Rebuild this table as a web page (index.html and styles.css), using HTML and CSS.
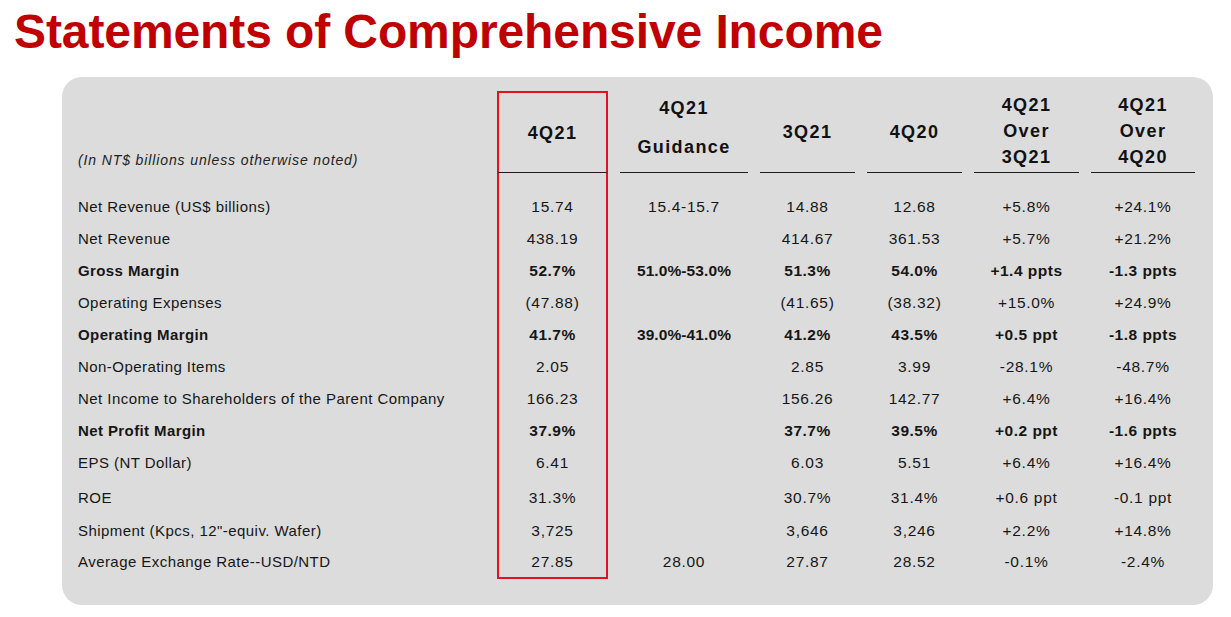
FILE: index.html
```html
<!DOCTYPE html>
<html lang="en">
<head>
<meta charset="utf-8">
<title>Statements of Comprehensive Income</title>
<link rel="stylesheet" href="styles.css">
</head>
<body>
<h1 class="title">Statements of Comprehensive Income</h1>
<section class="panel">
  <div class="stmt">
    <div class="head">
      <div class="hcell hcell--label"><span class="note">(In NT$ billions unless otherwise noted)</span></div>
      <div class="hcell hcell--ul hl hl--top"><span>4Q21</span></div>
      <div class="hcell hcell--ul hcell--guide"><span>4Q21</span><span class="guide-2">Guidance</span></div>
      <div class="hcell hcell--ul"><span>3Q21</span></div>
      <div class="hcell hcell--ul"><span>4Q20</span></div>
      <div class="hcell hcell--ul hcell--three"><span>4Q21</span><span>Over</span><span>3Q21</span></div>
      <div class="hcell hcell--ul hcell--three"><span>4Q21</span><span>Over</span><span>4Q20</span></div>
    </div>

    <div class="row row--first"><div class="lbl">Net Revenue (US$ billions)</div><div class="v hl">15.74</div><div class="v">15.4-15.7</div><div class="v">14.88</div><div class="v">12.68</div><div class="v">+5.8%</div><div class="v">+24.1%</div></div>
    <div class="row"><div class="lbl">Net Revenue</div><div class="v hl">438.19</div><div class="v"></div><div class="v">414.67</div><div class="v">361.53</div><div class="v">+5.7%</div><div class="v">+21.2%</div></div>
    <div class="row row--b"><div class="lbl">Gross Margin</div><div class="v hl">52.7%</div><div class="v guide-range">51.0%-53.0%</div><div class="v">51.3%</div><div class="v">54.0%</div><div class="v">+1.4 ppts</div><div class="v">-1.3 ppts</div></div>
    <div class="row"><div class="lbl">Operating Expenses</div><div class="v hl">(47.88)</div><div class="v"></div><div class="v">(41.65)</div><div class="v">(38.32)</div><div class="v">+15.0%</div><div class="v">+24.9%</div></div>
    <div class="row row--b"><div class="lbl">Operating Margin</div><div class="v hl">41.7%</div><div class="v guide-range">39.0%-41.0%</div><div class="v">41.2%</div><div class="v">43.5%</div><div class="v">+0.5 ppt</div><div class="v">-1.8 ppts</div></div>
    <div class="row"><div class="lbl">Non-Operating Items</div><div class="v hl">2.05</div><div class="v"></div><div class="v">2.85</div><div class="v">3.99</div><div class="v">-28.1%</div><div class="v">-48.7%</div></div>
    <div class="row"><div class="lbl">Net Income to Shareholders of the Parent Company</div><div class="v hl">166.23</div><div class="v"></div><div class="v">156.26</div><div class="v">142.77</div><div class="v">+6.4%</div><div class="v">+16.4%</div></div>
    <div class="row row--b"><div class="lbl">Net Profit Margin</div><div class="v hl">37.9%</div><div class="v"></div><div class="v">37.7%</div><div class="v">39.5%</div><div class="v">+0.2 ppt</div><div class="v">-1.6 ppts</div></div>
    <div class="row"><div class="lbl">EPS (NT Dollar)</div><div class="v hl">6.41</div><div class="v"></div><div class="v">6.03</div><div class="v">5.51</div><div class="v">+6.4%</div><div class="v">+16.4%</div></div>
    <div class="row row--roe"><div class="lbl">ROE</div><div class="v hl">31.3%</div><div class="v"></div><div class="v">30.7%</div><div class="v">31.4%</div><div class="v">+0.6 ppt</div><div class="v">-0.1 ppt</div></div>
    <div class="row row--ship"><div class="lbl">Shipment (Kpcs, 12"-equiv. Wafer)</div><div class="v hl">3,725</div><div class="v"></div><div class="v">3,646</div><div class="v">3,246</div><div class="v">+2.2%</div><div class="v">+14.8%</div></div>
    <div class="row row--last"><div class="lbl">Average Exchange Rate--USD/NTD</div><div class="v hl hl--bottom">27.85</div><div class="v">28.00</div><div class="v">27.87</div><div class="v">28.52</div><div class="v">-0.1%</div><div class="v">-2.4%</div></div>
  </div>
</section>
</body>
</html>
```
FILE: styles.css
```css
html, body {
  margin: 0;
  padding: 0;
  background: #ffffff;
}
body {
  width: 1231px;
  height: 617px;
  overflow: hidden;
  font-family: "Liberation Sans", Arial, sans-serif;
  color: #161616;
}
.title {
  margin: 8px 0 0 14px;
  font-size: 48px;
  line-height: 48px;
  font-weight: 700;
  color: #c00000;
  letter-spacing: -0.1px;
}
.panel {
  margin: 21px 0 0 62px;
  width: 1151px;
  height: 528px;
  box-sizing: border-box;
  padding: 14px 17px 0 16px;
  background: #dcdcdc;
  border-radius: 20px;
}
.stmt {
  display: flex;
  flex-direction: column;
}
.head,
.row {
  display: grid;
  grid-template-columns: 407px 111px 128px 95px 95px 105px 104px;
  column-gap: 12px;
}
.head {
  height: 82px;
}
.hcell {
  box-sizing: border-box;
  display: flex;
  flex-direction: column;
  align-items: center;
  justify-content: center;
  font-weight: 700;
  font-size: 18px;
  letter-spacing: 1.4px;
  line-height: 26px;
  color: #111;
}
.hcell--ul {
  border-bottom: 1px solid #1e1e1e;
}
.hcell--guide {
  justify-content: flex-start;
  padding-top: 4px;
}
.guide-2 {
  margin-top: 13px;
}
.hcell--three {
  padding-bottom: 2px;
}
.hcell--label {
  align-items: flex-start;
  justify-content: flex-end;
  padding-bottom: 4px;
}
.note {
  font-size: 14px;
  font-weight: 400;
  font-style: italic;
  letter-spacing: 0.88px;
  line-height: 18px;
  color: #222;
}
.hl {
  box-sizing: border-box;
  border-left: 2px solid #e3121c;
  border-right: 2px solid #e3121c;
}
.hl--top {
  border-top: 2px solid #e3121c;
}
.hl--bottom {
  border-bottom: 2px solid #e3121c;
}
.lbl,
.v {
  line-height: 32px;
  white-space: nowrap;
}
.lbl {
  font-size: 15px;
  letter-spacing: 0.45px;
}
.v {
  text-align: center;
  font-size: 15.5px;
  letter-spacing: 0.7px;
}
.row--first > * {
  padding-top: 18px;
}
.row--roe > * {
  padding-top: 3px;
}
.row--ship > * {
  padding-top: 1px;
}
.row--last > * {
  line-height: 30px;
}
.row--b .lbl,
.row--b .v {
  font-weight: 700;
  letter-spacing: 0.5px;
}
.row--b .lbl {
  letter-spacing: 0.4px;
}
.row--b .guide-range {
  letter-spacing: 0.1px;
  word-spacing: -3px;
}
```
